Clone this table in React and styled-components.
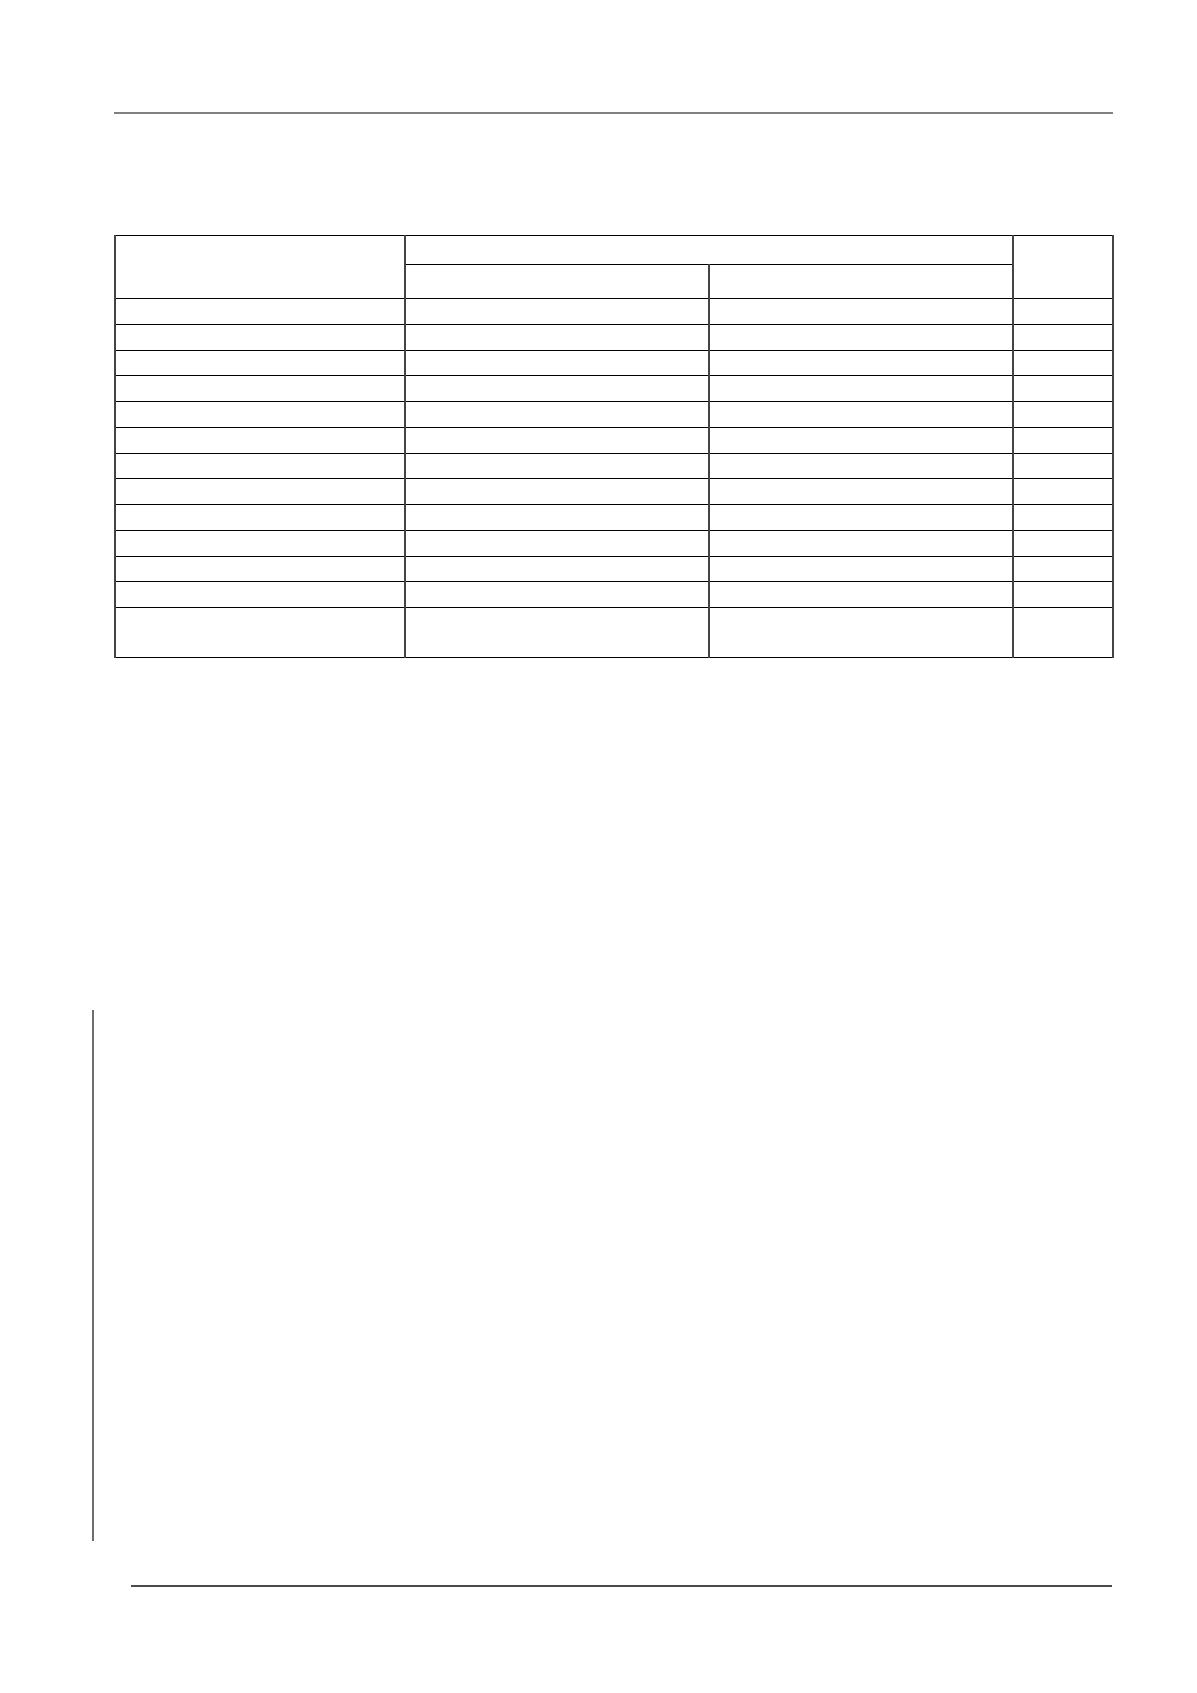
import React from 'react';
import styled, { createGlobalStyle } from 'styled-components';

const GlobalStyle = createGlobalStyle`
  html, body {
    margin: 0;
    padding: 0;
    background: #ffffff;
    font-family: "Liberation Sans", Arial, sans-serif;
  }
`;

const Page = styled.div`
  width: 1197px;
  height: 1693px;
  background: #ffffff;
  overflow: hidden;
`;

const HeaderRule = styled.div`
  margin: 112px 0 0 114px;
  width: 999px;
  height: 2px;
  background: #808080;
`;

const Sheet = styled.table`
  margin: 121px 0 0 114px;
  width: 998px;
  table-layout: fixed;
  border-collapse: collapse;
  border: 1px solid #000;
`;

const Row = styled.tr`
  height: ${p => p.$h}px;
`;

const Cell = styled.td`
  padding: 0;
  border-top: 1px solid #000;
  border-bottom: 1px solid #000;
  border-left: 2px solid #444;
  border-right: 2px solid #444;
`;

const MarginMark = styled.div`
  margin: 352px 0 0 92px;
  width: 2px;
  height: 531px;
  background: #6e6e6e;
`;

const FooterRule = styled.div`
  margin: 44px 0 0 131px;
  width: 981px;
  height: 2px;
  background: #4a4a4a;
`;

const rows = Array.from({ length: 12 }, (_, i) => i);

export default function App() {
  return (
    <Page>
      <GlobalStyle />
      <HeaderRule />
      <Sheet>
        <colgroup>
          <col style={{ width: 290 }} />
          <col style={{ width: 304 }} />
          <col style={{ width: 304 }} />
          <col style={{ width: 100 }} />
        </colgroup>
        <tbody>
          <Row $h={29}>
            <Cell rowSpan={2} />
            <Cell colSpan={2} />
            <Cell rowSpan={2} />
          </Row>
          <Row $h={34}>
            <Cell />
            <Cell />
          </Row>
          {rows.map(r => (
            <Row key={r} $h={25.75}>
              <Cell />
              <Cell />
              <Cell />
              <Cell />
            </Row>
          ))}
          <Row $h={50}>
            <Cell />
            <Cell />
            <Cell />
            <Cell />
          </Row>
        </tbody>
      </Sheet>
      <MarginMark />
      <FooterRule />
    </Page>
  );
}
